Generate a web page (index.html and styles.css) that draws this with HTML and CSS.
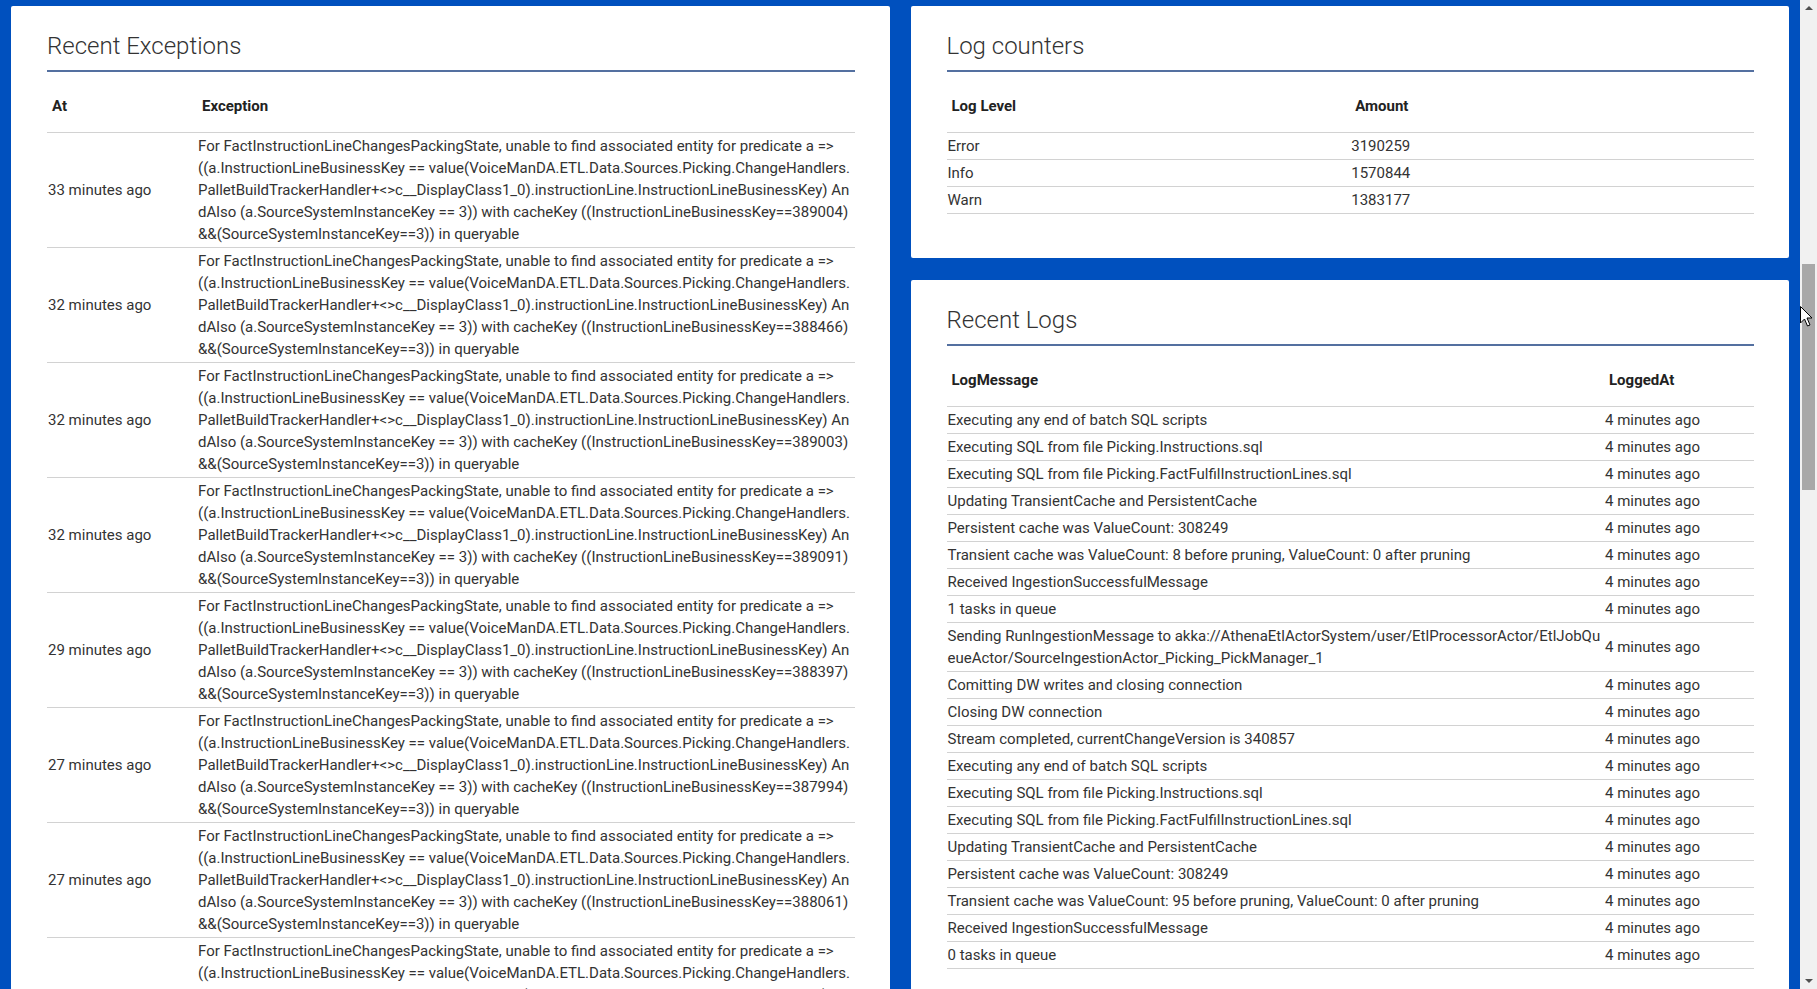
FILE: index.html
```html
<!DOCTYPE html>
<html>
<head>
<meta charset="utf-8">
<title>Dashboard</title>
<link rel="stylesheet" href="styles.css">
</head>
<body>
<div class="viewport">
  <main class="page">
    <section class="col">
      <div class="card card-tall">
        <h2 class="card-title">Recent Exceptions</h2>
        <table class="grid">
          <colgroup><col class="w150"><col></colgroup>
          <thead><tr><th>At</th><th>Exception</th></tr></thead>
          <tbody>
            <tr><td>33 minutes ago</td><td>For FactInstructionLineChangesPackingState, unable to find associated entity for predicate a =&gt; ((a.InstructionLineBusinessKey == value(VoiceManDA.ETL.Data.Sources.Picking.ChangeHandlers.PalletBuildTrackerHandler+&lt;&gt;c__DisplayClass1_0).instructionLine.InstructionLineBusinessKey) AndAlso (a.SourceSystemInstanceKey == 3)) with cacheKey ((InstructionLineBusinessKey==389004)&amp;&amp;(SourceSystemInstanceKey==3)) in queryable</td></tr>
            <tr><td>32 minutes ago</td><td>For FactInstructionLineChangesPackingState, unable to find associated entity for predicate a =&gt; ((a.InstructionLineBusinessKey == value(VoiceManDA.ETL.Data.Sources.Picking.ChangeHandlers.PalletBuildTrackerHandler+&lt;&gt;c__DisplayClass1_0).instructionLine.InstructionLineBusinessKey) AndAlso (a.SourceSystemInstanceKey == 3)) with cacheKey ((InstructionLineBusinessKey==388466)&amp;&amp;(SourceSystemInstanceKey==3)) in queryable</td></tr>
            <tr><td>32 minutes ago</td><td>For FactInstructionLineChangesPackingState, unable to find associated entity for predicate a =&gt; ((a.InstructionLineBusinessKey == value(VoiceManDA.ETL.Data.Sources.Picking.ChangeHandlers.PalletBuildTrackerHandler+&lt;&gt;c__DisplayClass1_0).instructionLine.InstructionLineBusinessKey) AndAlso (a.SourceSystemInstanceKey == 3)) with cacheKey ((InstructionLineBusinessKey==389003)&amp;&amp;(SourceSystemInstanceKey==3)) in queryable</td></tr>
            <tr><td>32 minutes ago</td><td>For FactInstructionLineChangesPackingState, unable to find associated entity for predicate a =&gt; ((a.InstructionLineBusinessKey == value(VoiceManDA.ETL.Data.Sources.Picking.ChangeHandlers.PalletBuildTrackerHandler+&lt;&gt;c__DisplayClass1_0).instructionLine.InstructionLineBusinessKey) AndAlso (a.SourceSystemInstanceKey == 3)) with cacheKey ((InstructionLineBusinessKey==389091)&amp;&amp;(SourceSystemInstanceKey==3)) in queryable</td></tr>
            <tr><td>29 minutes ago</td><td>For FactInstructionLineChangesPackingState, unable to find associated entity for predicate a =&gt; ((a.InstructionLineBusinessKey == value(VoiceManDA.ETL.Data.Sources.Picking.ChangeHandlers.PalletBuildTrackerHandler+&lt;&gt;c__DisplayClass1_0).instructionLine.InstructionLineBusinessKey) AndAlso (a.SourceSystemInstanceKey == 3)) with cacheKey ((InstructionLineBusinessKey==388397)&amp;&amp;(SourceSystemInstanceKey==3)) in queryable</td></tr>
            <tr><td>27 minutes ago</td><td>For FactInstructionLineChangesPackingState, unable to find associated entity for predicate a =&gt; ((a.InstructionLineBusinessKey == value(VoiceManDA.ETL.Data.Sources.Picking.ChangeHandlers.PalletBuildTrackerHandler+&lt;&gt;c__DisplayClass1_0).instructionLine.InstructionLineBusinessKey) AndAlso (a.SourceSystemInstanceKey == 3)) with cacheKey ((InstructionLineBusinessKey==387994)&amp;&amp;(SourceSystemInstanceKey==3)) in queryable</td></tr>
            <tr><td>27 minutes ago</td><td>For FactInstructionLineChangesPackingState, unable to find associated entity for predicate a =&gt; ((a.InstructionLineBusinessKey == value(VoiceManDA.ETL.Data.Sources.Picking.ChangeHandlers.PalletBuildTrackerHandler+&lt;&gt;c__DisplayClass1_0).instructionLine.InstructionLineBusinessKey) AndAlso (a.SourceSystemInstanceKey == 3)) with cacheKey ((InstructionLineBusinessKey==388061)&amp;&amp;(SourceSystemInstanceKey==3)) in queryable</td></tr>
            <tr><td>26 minutes ago</td><td>For FactInstructionLineChangesPackingState, unable to find associated entity for predicate a =&gt; ((a.InstructionLineBusinessKey == value(VoiceManDA.ETL.Data.Sources.Picking.ChangeHandlers.PalletBuildTrackerHandler+&lt;&gt;c__DisplayClass1_0).instructionLine.InstructionLineBusinessKey) AndAlso (a.SourceSystemInstanceKey == 3)) with cacheKey ((InstructionLineBusinessKey==388412)&amp;&amp;(SourceSystemInstanceKey==3)) in queryable</td></tr>
          </tbody>
        </table>
      </div>
    </section>
    <section class="col col-stack">
      <div class="card">
        <h2 class="card-title">Log counters</h2>
        <table class="grid">
          <colgroup><col class="half"><col class="half"></colgroup>
          <thead><tr><th>Log Level</th><th>Amount</th></tr></thead>
          <tbody>
            <tr><td>Error</td><td>3190259</td></tr>
            <tr><td>Info</td><td>1570844</td></tr>
            <tr><td>Warn</td><td>1383177</td></tr>
          </tbody>
        </table>
      </div>
      <div class="card">
        <h2 class="card-title">Recent Logs</h2>
        <table class="grid">
          <colgroup><col><col class="w150"></colgroup>
          <thead><tr><th>LogMessage</th><th>LoggedAt</th></tr></thead>
          <tbody>
            <tr><td>Executing any end of batch SQL scripts</td><td>4 minutes ago</td></tr>
            <tr><td>Executing SQL from file Picking.Instructions.sql</td><td>4 minutes ago</td></tr>
            <tr><td>Executing SQL from file Picking.FactFulfilInstructionLines.sql</td><td>4 minutes ago</td></tr>
            <tr><td>Updating TransientCache and PersistentCache</td><td>4 minutes ago</td></tr>
            <tr><td>Persistent cache was ValueCount: 308249</td><td>4 minutes ago</td></tr>
            <tr><td>Transient cache was ValueCount: 8 before pruning, ValueCount: 0 after pruning</td><td>4 minutes ago</td></tr>
            <tr><td>Received IngestionSuccessfulMessage</td><td>4 minutes ago</td></tr>
            <tr><td>1 tasks in queue</td><td>4 minutes ago</td></tr>
            <tr><td>Sending RunIngestionMessage to akka://AthenaEtlActorSystem/user/EtlProcessorActor/EtlJobQueueActor/SourceIngestionActor_Picking_PickManager_1</td><td>4 minutes ago</td></tr>
            <tr><td>Comitting DW writes and closing connection</td><td>4 minutes ago</td></tr>
            <tr><td>Closing DW connection</td><td>4 minutes ago</td></tr>
            <tr><td>Stream completed, currentChangeVersion is 340857</td><td>4 minutes ago</td></tr>
            <tr><td>Executing any end of batch SQL scripts</td><td>4 minutes ago</td></tr>
            <tr><td>Executing SQL from file Picking.Instructions.sql</td><td>4 minutes ago</td></tr>
            <tr><td>Executing SQL from file Picking.FactFulfilInstructionLines.sql</td><td>4 minutes ago</td></tr>
            <tr><td>Updating TransientCache and PersistentCache</td><td>4 minutes ago</td></tr>
            <tr><td>Persistent cache was ValueCount: 308249</td><td>4 minutes ago</td></tr>
            <tr><td>Transient cache was ValueCount: 95 before pruning, ValueCount: 0 after pruning</td><td>4 minutes ago</td></tr>
            <tr><td>Received IngestionSuccessfulMessage</td><td>4 minutes ago</td></tr>
            <tr><td>0 tasks in queue</td><td>4 minutes ago</td></tr>
          </tbody>
        </table>
      </div>
    </section>
  </main>
  <aside class="scrollbar">
    <div class="sb-arrow sb-up"></div>
    <div class="sb-track"><div class="sb-thumb"></div></div>
    <div class="sb-arrow sb-down"></div>
  </aside>
  <svg class="cursor" width="13" height="21" viewBox="0 0 13 21"><path d="M0.5 0.5 L0.5 17 L4.5 13 L7.5 20 L10 19 L7 12 L12 12 Z" fill="#fff" stroke="#000" stroke-width="1" stroke-linejoin="miter"/></svg>
</div>
</body>
</html>
```
FILE: styles.css
```css
html, body {
  margin: 0;
  padding: 0;
  height: 100%;
  overflow: hidden;
}
body {
  font-family: Roboto, "Liberation Sans", Arial, sans-serif;
  font-size: 15px;
  color: #333;
}
.viewport {
  position: relative;
  display: flex;
  height: 989px;
  overflow: hidden;
}
.page {
  flex: 1;
  display: flex;
  align-items: flex-start;
  gap: 21px;
  padding: 6px 11px 0 11px;
  background: #0050be;
  min-width: 0;
}
.col {
  flex: 1 1 0;
  min-width: 0;
}
.col-stack {
  display: flex;
  flex-direction: column;
  gap: 22px;
}
.card {
  background: #fff;
  border-radius: 2px;
  padding: 26px 35px 44px 36px;
}
.card-tall {
  min-height: 1200px;
}
.card-title {
  margin: 0;
  font-weight: 300;
  font-size: 24px;
  line-height: 28px;
  color: #333;
  padding-bottom: 10px;
  border-bottom: 2px solid #5470a0;
}
.grid {
  width: 100%;
  margin-top: 10px;
  border-collapse: collapse;
  table-layout: fixed;
}
.w150 { width: 150px; }
.half { width: 50%; }
.grid th {
  text-align: left;
  font-weight: 700;
  color: #222;
  line-height: 22px;
  padding: 13px 4px 15px 5px;
  border-bottom: 1px solid #d2d2d2;
}
.grid td {
  line-height: 22px;
  padding: 2px 3px 2px 1px;
  border-bottom: 1px solid #d2d2d2;
  vertical-align: middle;
  word-break: break-all;
}
.scrollbar {
  width: 17px;
  background: #f1f1f1;
  display: flex;
  flex-direction: column;
}
.sb-arrow {
  height: 17px;
  position: relative;
}
.sb-up::after, .sb-down::after {
  content: "";
  position: absolute;
  left: 5px;
  border-left: 4px solid transparent;
  border-right: 4px solid transparent;
}
.sb-up::after {
  top: 6px;
  border-bottom: 4px solid #505050;
}
.sb-down::after {
  bottom: 6px;
  border-top: 4px solid #505050;
}
.sb-track {
  flex: 1;
  padding: 247px 2px 0 2px;
}
.sb-thumb {
  height: 226px;
  background: #a8a8a8;
}
.cursor {
  position: absolute;
  left: 1800px;
  top: 306px;
}
```
